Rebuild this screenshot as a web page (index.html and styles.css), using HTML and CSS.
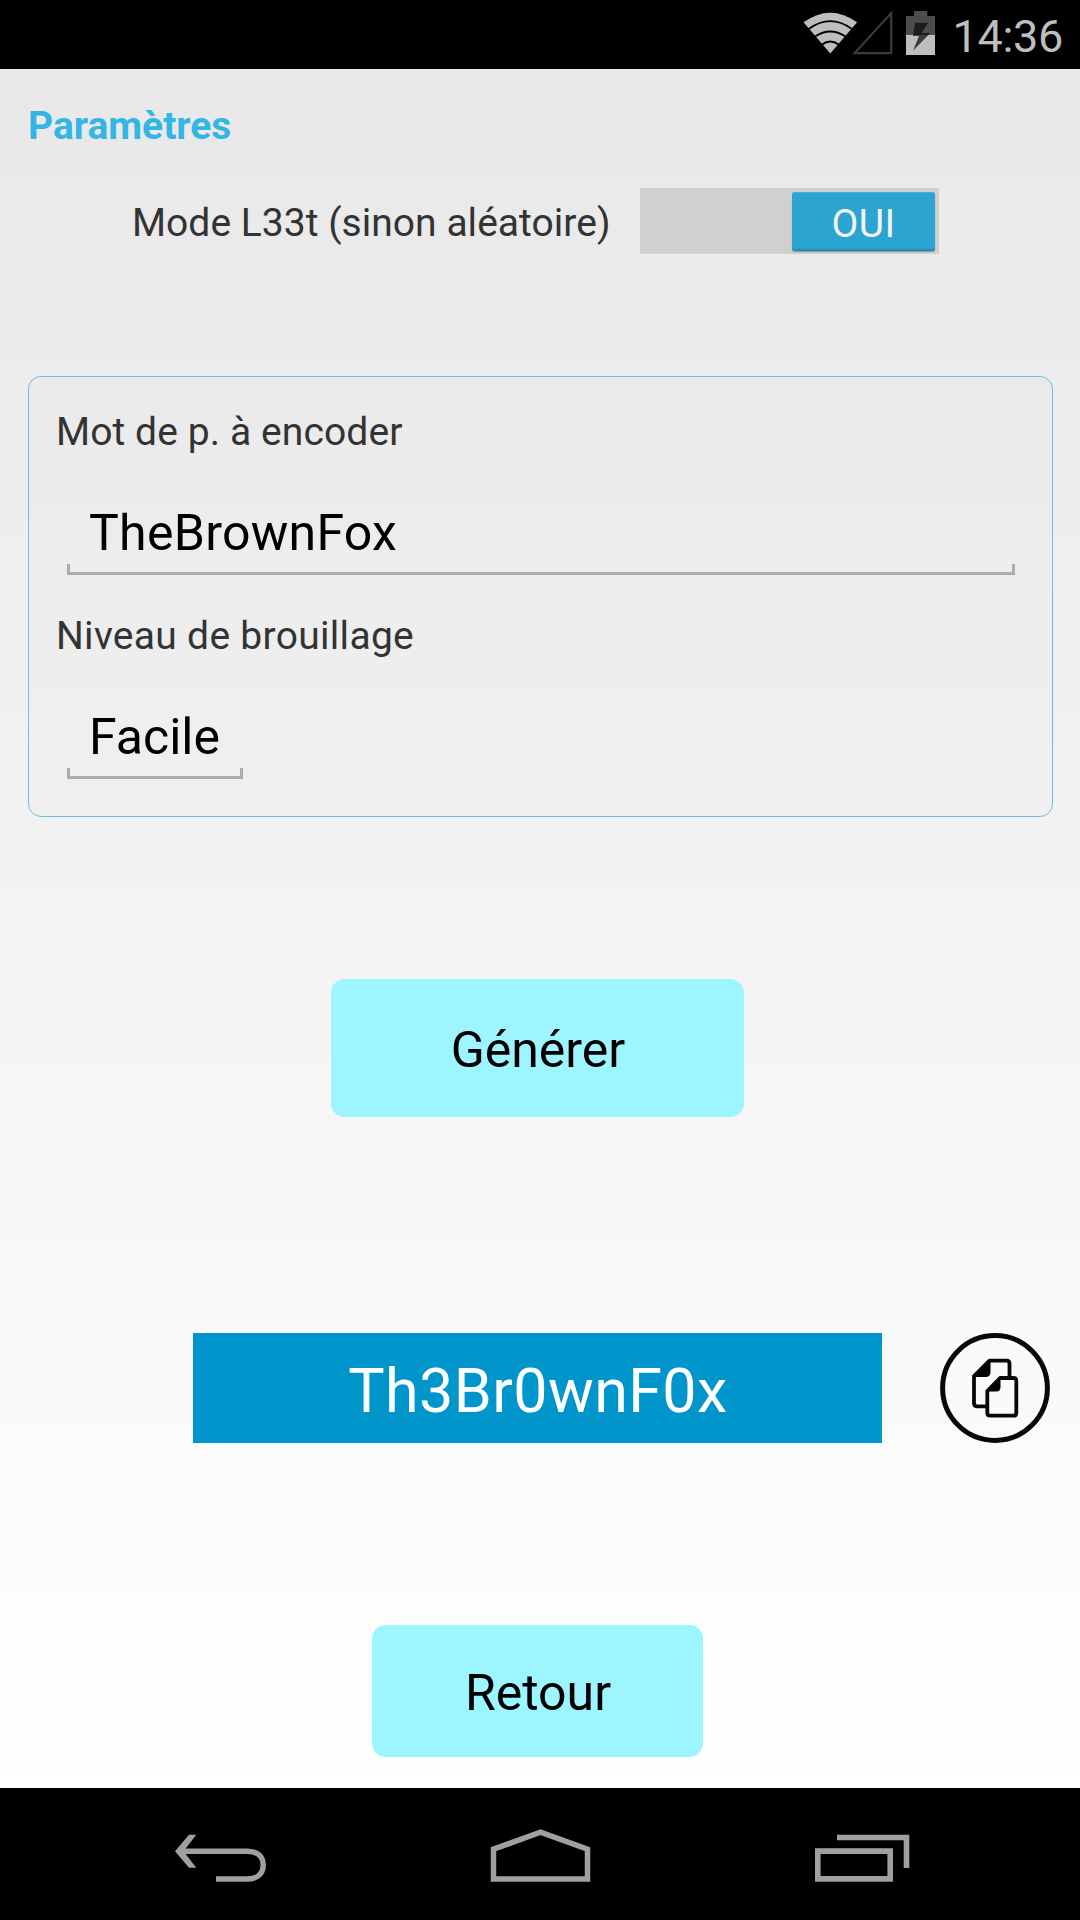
FILE: index.html
```html
<!DOCTYPE html>
<html lang="fr">
<head>
<meta charset="utf-8">
<title>Paramètres</title>
<link rel="stylesheet" href="styles.css">
</head>
<body>
<header class="status-bar">
  <svg class="status-icons" width="140" height="69" viewBox="0 0 140 69">
    <defs>
      <linearGradient id="bolt" gradientUnits="userSpaceOnUse" x1="0" y1="22" x2="0" y2="51">
        <stop offset=".45" stop-color="#1c1c1c"/>
        <stop offset=".45" stop-color="#3c3c3c"/>
      </linearGradient>
    </defs>
    <path d="M3.5 22.3Q30.3 3 57.1 22.3L30.3 53.5Z" fill="#bebebe"/>
    <path d="M9 28.8Q30.3 13.5 51.6 28.8M15 36.5Q30.3 26.5 45.6 36.5M22 44.5Q30.3 38.5 38.6 44.5" fill="none" stroke="#000" stroke-width="1.9"/>
    <path d="M54.5 53.2L91.2 13V53.2Z" fill="none" stroke="#3a3a3a" stroke-width="2.2"/>
    <path d="M106 16h8v-5h13.300v5h7.700v19h-29z" fill="#4d4d4d"/>
    <path d="M106 35h29v20h-29z" fill="#bebebe"/>
    <path d="M115 22.700H128.300L121.700 33H130.300L113 50.700L119 36H113Z" fill="url(#bolt)"/>
  </svg>
  <span class="clock">14:36</span>
</header>
<main class="screen">
  <h1 class="title">Paramètres</h1>
  <div class="mode-row">
    <span class="mode-label">Mode L33t (sinon aléatoire)</span>
    <div class="switch"><div class="thumb">OUI</div></div>
  </div>
  <section class="panel">
    <div class="label label-password">Mot de p. à encoder</div>
    <div class="field field-wide">TheBrownFox</div>
    <div class="label label-level">Niveau de brouillage</div>
    <div class="field field-short">Facile</div>
  </section>
  <button class="button generate">Générer</button>
  <div class="result-row">
    <div class="result">Th3Br0wnF0x</div>
    <svg class="copy" width="110" height="110" viewBox="0 0 110 110">
      <circle cx="55" cy="55" r="52.400" fill="none" stroke="#080808" stroke-width="5"/>
      <g fill="none" stroke="#080808" stroke-width="3.800" stroke-linejoin="round">
        <path d="M47.300 73.300H37Q34 73.300 34 70.300V43L49.500 27.700H66.500Q69.500 27.700 69.500 30.700V45"/>
        <path d="M47.300 58L60 45H73.500Q76.300 45 76.300 47.800V80Q76.300 82.700 73.500 82.700H50.100Q47.300 82.700 47.300 80Z"/>
      </g>
      <path d="M34 44L50.500 27.500V39Q50.500 44 45.500 44ZM47.300 58.500L60.500 45V54Q60.500 58.500 56 58.500Z" fill="#000"/>
    </svg>
  </div>
  <button class="button back">Retour</button>
</main>
<footer class="nav-bar">
  <svg class="nav-back" width="94" height="132" viewBox="0 0 94 132">
    <path d="M1 63.200L15 46.700H22.300L9.500 63.200L22.300 79.700H15Z" fill="#a0a0a0"/>
    <path d="M6 63.200H73C84 63.200 89.200 69 89.200 77.100S84 91 73 91H42" fill="none" stroke="#a0a0a0" stroke-width="5.500"/>
  </svg>
  <svg class="nav-home" width="102" height="132" viewBox="0 0 102 132">
    <path d="M3.500 61.200L50.500 44.200L97.500 61.200V91H3.500Z" fill="none" stroke="#a0a0a0" stroke-width="5.500"/>
  </svg>
  <svg class="nav-recent" width="98" height="132" viewBox="0 0 98 132">
    <path d="M3.800 63.100H76.200V90.900H3.800ZM23 49.500H92.500V80" fill="none" stroke="#a0a0a0" stroke-width="5.600"/>
  </svg>
</footer>
</body>
</html>
```
FILE: styles.css
```css
* { box-sizing: border-box; }

body {
  margin: 0;
  width: 1080px;
  height: 1920px;
  display: flex;
  flex-direction: column;
  font-family: Roboto, sans-serif;
  color: #000;
}

svg { display: block; flex: none; }

.status-bar {
  height: 69px;
  background: #000;
  display: flex;
  justify-content: space-between;
  padding: 0 17px 0 800px;
}

.clock {
  font-size: 45px;
  line-height: 69px;
  padding-top: 2px;
  letter-spacing: -0.3px;
  color: #bebebe;
}

.screen {
  height: 1719px;
  background: linear-gradient(#e8e8e8, #fff);
  display: flex;
  flex-direction: column;
  align-items: flex-start;
}

.title {
  margin: 34px 0 0 28px;
  font-size: 39px;
  line-height: 46px;
  font-weight: 700;
  color: #33b5e5;
}

.mode-row {
  display: flex;
  justify-content: space-between;
  width: 807px;
  height: 66px;
  margin: 39px 0 0 132px;
  white-space: nowrap;
}

.mode-label {
  font-size: 39px;
  line-height: 66px;
  padding-top: 2px;
  letter-spacing: 0.03px;
  color: #333;
}

.switch {
  display: flex;
  justify-content: flex-end;
  width: 299px;
  height: 66px;
  padding: 4px;
  background: #d0d0d0;
}

.thumb {
  width: 143px;
  height: 59px;
  border-radius: 3px;
  background: #2ba4d0;
  box-shadow: inset 0 1px 1px #49b3d9, inset 0 -2px 1px #2290b8, 0 1px 1px rgba(0, 0, 0, 0.3);
  color: #f3f3f3;
  font-size: 39px;
  line-height: 64px;
  letter-spacing: 0.4px;
  text-align: center;
}

.panel {
  margin: 122px 0 0 28px;
  width: 1025px;
  height: 441px;
  border: 1px solid #69c0e0;
  border-radius: 13px;
  padding: 32px 0 0 28px;
  background: rgba(0, 0, 0, 0.006);
}

.label {
  font-size: 39px;
  line-height: 46px;
  letter-spacing: 0.1px;
  color: #333;
}

.label-password { margin-left: -1px; }
.label-level { margin: 38px 0 0 -1px; letter-spacing: 0.3px; }

.field {
  position: relative;
  height: 120px;
  margin-left: 10px;
  padding: 48px 0 0 22px;
  border-bottom: 3px solid #acacac;
  font-size: 50px;
  line-height: 60px;
}

.field-wide { width: 948px; letter-spacing: 0.28px; }
.field-short { width: 176px; }

.field::before,
.field::after {
  content: "";
  position: absolute;
  bottom: 0;
  width: 3px;
  height: 8px;
  background: #acacac;
}

.field::before { left: 0; }
.field::after { right: 0; }

.button {
  border: 0;
  border-radius: 14px;
  background: #9df5ff;
  color: #000;
  font-family: inherit;
  font-size: 50px;
  text-align: center;
}

.generate {
  width: 413px;
  height: 138px;
  margin: 162px 0 0 331px;
  padding: 4px 0 0 1px;
}

.result-row {
  display: flex;
  gap: 58px;
  margin: 216px 0 0 193px;
}

.result {
  width: 689px;
  height: 110px;
  padding: 3px 0 0 1px;
  background: #0096cc;
  color: #fff;
  font-size: 61px;
  line-height: 110px;
  letter-spacing: 0.4px;
  text-align: center;
}

.back {
  width: 331px;
  height: 132px;
  margin: 182px 0 0 372px;
  padding: 4px 0 0 1px;
}

.nav-bar {
  height: 132px;
  display: flex;
  justify-content: space-between;
  padding: 0 168px 0 174px;
  background: #000;
}
```
